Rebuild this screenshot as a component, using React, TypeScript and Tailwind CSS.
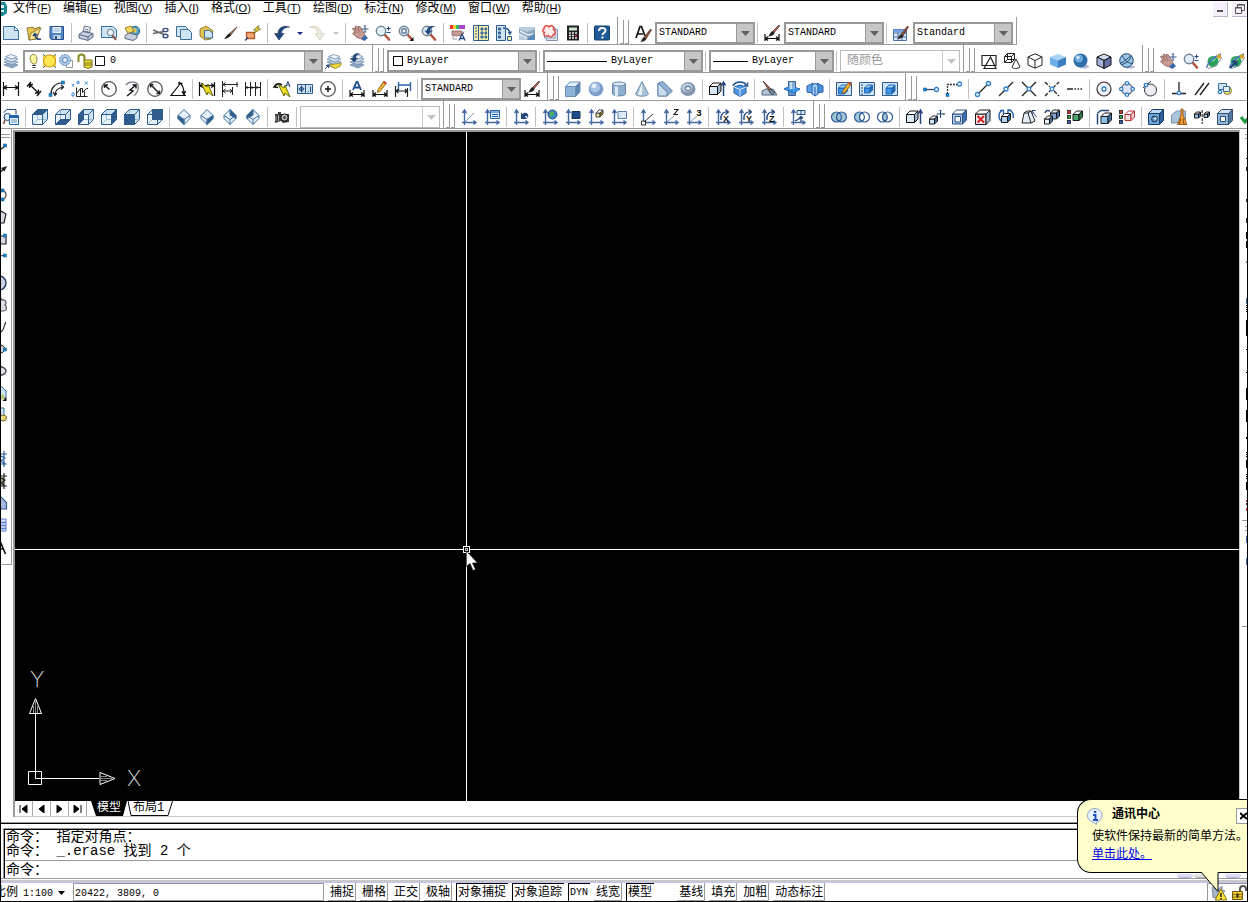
import type { ReactNode } from "react";
import clsx from "clsx";

const NAVY = "#23457a";
const BLUE = "#2f7fd0";
const PALE = "#cfe4f2";
const INK = "#1a1a1a";

function cube(x: number, y: number, s: number, d: number, front: string, top: string, side: string, stroke = INK) {
  return (
    <g stroke={stroke} strokeLinejoin="round">
      <path d={`M${x} ${y + d}h${s}v${s}h${-s}z`} fill={front} />
      <path d={`M${x} ${y + d}l${d} ${-d}h${s}l${-d} ${d}z`} fill={top} />
      <path d={`M${x + s} ${y + d}l${d} ${-d}v${s}l${-d} ${d}z`} fill={side} />
    </g>
  );
}

function viewCube(face: ReactNode) {
  return (
    <g stroke="#2f5c8c" strokeLinejoin="round">
      <path d="M.5 5.500l5-5h10v10l-5 5H.5z" fill={PALE} />
      <path d="M1 6h9v9H1z" fill="#e8f3fa" stroke="none" />
      <path d="M5.500 .5v10h10M.5 15.500l5-5" fill="none" stroke="#9dbcd8" />
      <g fill="#2f5c8c">{face}</g>
      <path d="M.5 5.500h10v10M10.500 5.500l5-5" fill="none" />
    </g>
  );
}

function isoCube(face: string) {
  return (
    <g stroke="#3f6c9c" strokeLinejoin="round">
      <path d="M8 .5l6 6v3L8 15.500l-6-6v-3z" fill="#e4f0f8" />
      <path d={face} fill="#2f5c8c" />
      <path d="M2 6.500l6 4 6-4M8 10.500v5" fill="none" />
    </g>
  );
}

function axes(extra?: ReactNode) {
  return (
    <>
      <path d="M3.500 16V2M1.500 4l2-3 2 3M1 13.500h14M12.500 11.500l2.500 2-2.500 2" fill="none" stroke="#4468a0" strokeWidth="1.400" />
      {extra}
    </>
  );
}

function axisRotate(letter: string) {
  return axes(
    <>
      <path d="M6 11C5 5 9 2 13 3M10.500 .5l3 2.500-3 2.500" fill="none" stroke={NAVY} strokeWidth="1.300" />
      <text x="8" y="12.500" fontSize="9" fontWeight="700" fontFamily="Liberation Sans" fill="#111">{letter}</text>
    </>,
  );
}

function dot(cx: number, cy: number, r = 2) {
  return <circle cx={cx} cy={cy} r={r} fill="#fff" stroke={BLUE} strokeWidth="1.300" />;
}

const node = (x: number, y: number) => <rect x={x} y={y} width="3" height="3" fill="#1c86c8" stroke="#0d4f88" strokeWidth=".5" />;

const bolt = <path d="M2 2l6 4 1-3 5 12-5-4-1 3z" fill="#f0e020" stroke="#55560c" strokeWidth=".9" />;

const brush = (
  <g>
    <path d="M14.500 1L8 9.500l2 1.500L15.500 2z" fill="#8a4a3a" stroke="#4b2a24" strokeWidth=".6" />
    <path d="M8 9l2.500 2c-1 2-3.500 3-6 2.800C5.500 12.500 6 10 8 9z" fill="#2b2b2b" />
  </g>
);

const pencil = (
  <g>
    <path d="M13 1l2.500 2L9 11.500 6.500 12.500 7 9.500z" fill="#f2b632" stroke="#7c5412" strokeWidth=".8" />
    <path d="M13 1l2.500 2-1.200 1.400-2.300-2z" fill="#c9483c" />
  </g>
);

const lens = (
  <g>
    <path d="M9.500 9.500L14 14.500" stroke="#b2553c" strokeWidth="2.600" strokeLinecap="round" />
    <circle cx="6" cy="6" r="4.700" fill="#e4f0f8" stroke="#6f8495" strokeWidth="1.400" />
  </g>
);

const printer = (
  <g stroke="#4a5a78" strokeWidth=".9" strokeLinejoin="round">
    <path d="M5 7l1.500-6 6 1.500L11.500 8" fill="#fff" />
    <path d="M1 9.500L5 6.500l10 2v3.500L10 15.500 1 13z" fill="#c7cfe0" />
    <path d="M1 9.500l9 2.500 5-3.500M10 12v3.500" fill="none" />
    <path d="M7 4l3.500 .8M6.500 6l4 .9" />
  </g>
);

const hand = (
  <g>
    <path d="M.5 3.500L2 3l2 2L3 1.500 4.500 1l2 3L6.500 1.500 8 1.500l3 5 2 4-3.500 3.500L5 12.500.5 8.500l1-1 2 .5z" fill="#c79a93" stroke="#8a5a54" strokeWidth=".8" />
    <path d="M3.500 5l2.500 3M6 4l2 3.500" stroke="#8a5a54" strokeWidth=".7" />
    <path d="M9 14l4-4 3 3-3.500 3z" fill="#3a67a8" />
    <path d="M13 .5v7M9.500 4h7M12 1.500l1-1 1 1M12 6.500l1 1 1-1" stroke={NAVY} strokeWidth=".9" fill="none" />
  </g>
);

const zoomRt = (
  <>
    {lens}
    <path d="M11.500 3.500h4M13.500 1.500v4M11.500 7.500h4" stroke={NAVY} strokeWidth="1.100" />
  </>
);

const layers = (
  <g stroke="#5f80a4" strokeWidth=".7">
    <path d="M1 12l6-2.500 8 2.500-6 3z" fill="#8fa9c4" />
    <path d="M1 9l6-2.500L15 9l-6 3z" fill="#b4cadd" />
    <path d="M1 6l6-2.500L15 6 9 9z" fill="#d6e5f0" />
    <path d="M2.500 3.500L8 1.500l6 2-5 2.500z" fill="#f0f6fa" />
  </g>
);

const dimBase = <path d="M1 9v7M15 9v7M1 13.500h14M4 11.500l-2.500 2 2.500 2M12 11.500l2.500 2-2.500 2" fill="none" stroke="#111" strokeWidth="1.200" />;

const planet = (
  <g>
    <circle cx="7" cy="8.500" r="5.500" fill="#27a458" />
    <path d="M4 7c2-3 5-3 6-2-1 3-3 5-6 2z" fill="#7fdc9a" />
    <path d="M1 15C0 11 9 3 15 1" fill="none" stroke="#4868c0" strokeWidth="1.400" />
    <path d="M2 15.500C8 15 14 9 15.500 4" fill="none" stroke="#8b96a8" />
    <circle cx="13" cy="3.500" r="2.200" fill="#d9a52c" />
  </g>
);

const rings = (left: string, mid: string, right: string) => (
  <g stroke="#2f5c96" strokeWidth="1.200">
    <ellipse cx="5.500" cy="8" rx="5" ry="5" fill={left} />
    <ellipse cx="10.500" cy="8" rx="5" ry="5" fill={right} />
    <path d="M8 3.700a5 5 0 0 1 0 8.600a5 5 0 0 1 0-8.600z" fill={mid} />
  </g>
);

const swatches = (
  <g stroke="#111" strokeWidth=".8">
    <rect x=".5" y="1.500" width="3" height="3" fill="#e03a30" />
    <rect x=".5" y="6.500" width="3" height="3" fill="#2fa84f" />
    <rect x=".5" y="11.500" width="3" height="3" fill="#3b62d0" />
  </g>
);

const extrude = (
  <>
    {cube(.5, 2, 8, 3.500, "#dbe9f4", "#fff", "#9db8d0", "#111")}
    <path d="M14.500 15V2M12.500 4.500L14.500 1l2 3.500" stroke={NAVY} strokeWidth="1.500" fill="none" />
  </>
);

const icons: Record<string, ReactNode> = {
  // standard
  New: <path d="M.5 1.500h11l4 4v9H.5zM11.500 1.500v4h4" fill={PALE} stroke="#3a6f9c" />,
  Open: (
    <>
      <path d="M1 3l6-1 1 2 6-2-3 12-8 1z" fill="#e9c74f" stroke="#7a6420" strokeWidth=".8" />
      <path d="M5 8l10-5-5 11-7 1z" fill="#fae79a" stroke="#7a6420" strokeWidth=".8" />
      <path d="M15 14c-3 1-6-1-6-4M7 11l2-2.500 2.500 2" fill="none" stroke={NAVY} strokeWidth="1.600" />
    </>
  ),
  Save: (
    <>
      <path d="M1 1.500h13.500v13H2.500L1 13z" fill="#4f84c4" stroke="#274f86" />
      <path d="M3.500 2h8.500v6H3.500z" fill="#eaf2fa" />
      <path d="M4.500 4h6.500M4.500 6h6.500" stroke="#8fb1d6" />
      <path d="M4.500 10h7v4h-7z" fill="#cfdae8" />
      <path d="M6 11h2v3H6z" fill="#274f86" />
    </>
  ),
  Plot: printer,
  Preview: (
    <>
      <path d="M.5 1.500h11l4 3v8H.5z" fill={PALE} stroke="#3a6f9c" />
      <path d="M11 10l4 5" stroke="#8a4a3a" strokeWidth="2" />
      <circle cx="9.500" cy="7.500" r="3.200" fill="#eef6fb" stroke="#5d7288" />
    </>
  ),
  Publish: (
    <>
      <circle cx="11" cy="6" r="4.700" fill="#4fa0d0" stroke="#2e6080" />
      <path d="M9 3l4 1-1 4-3-1z" fill="#e5c54c" />
      <path d="M1 3l6-2 3 5-6 3z" fill="#f2d75c" stroke="#7a6420" strokeWidth=".8" />
      <path d="M1 10.500L5 8l8 2v3l-4 2.500-8-2z" fill="#c7cfe0" stroke="#4a5a78" strokeWidth=".9" />
    </>
  ),
  Cut: (
    <g fill="none" stroke="#41517e" strokeWidth="1.400">
      <path d="M0 5l11 4.500M0 8.500L11 6.500" stroke="#666" />
      <ellipse cx="12.500" cy="5" rx="2.500" ry="1.600" />
      <ellipse cx="12.500" cy="11" rx="2.500" ry="1.800" />
    </g>
  ),
  Copy: (
    <g fill={PALE} stroke="#3a6f9c">
      <path d="M.5 1.500h9l2.500 3v7H.500z" />
      <path d="M4.500 4.500h8l3 3v7h-11z" />
    </g>
  ),
  Paste: (
    <>
      <path d="M1 4l6-3 7 5-2 8-6 1-5-4z" fill="#e3c14a" stroke="#7a6420" strokeWidth=".8" />
      <path d="M5.500 5.500h5l3 2.500v5h-8z" fill={PALE} stroke="#3a6f9c" />
    </>
  ),
  Match: (
    <>
      <path d="M15 2L7 9l1.500 1.500z" fill="#a36a50" stroke="#5a3428" strokeWidth=".8" />
      <path d="M7.500 8.500l1.500 2C6.500 13 4 14 2 14c1.500-1.500 3-4.500 5.500-5.500z" fill="#222" />
    </>
  ),
  Block: (
    <>
      <path d="M1.500 7.500h8v6h-8z" fill="#f5a874" stroke="#b4532c" strokeWidth="1.300" />
      <path d="M14 .5L8.500 5h3L8 9l7.500-5h-3z" fill="#ffe030" stroke="#6b6a10" strokeWidth=".8" />
      <path d="M0 15.500l3-3" stroke={NAVY} strokeWidth="1.500" />
    </>
  ),
  Undo: <path d="M15.500 2C10 0 4 2.500 4 8.500H.5L5 15l5-6.500H7.500C7.500 5 10 2.500 15.500 2z" fill="#24477c" stroke="#182f55" strokeWidth=".6" />,
  Redo: <path d="M.5 2C6 0 12 2.500 12 8.500h3.500L11 15 6 8.500h2.500C8.500 5 6 2.500 .5 2z" fill="#eceadb" stroke="#cfccb8" strokeWidth=".7" />,
  Pan: hand,
  Realtime: zoomRt,
  Window: (
    <>
      {lens}
      <rect x="4" y="4" width="4" height="4" fill="#fff" stroke={NAVY} />
      <path d="M15.500 12v4h-4z" fill="#111" />
    </>
  ),
  Previous: (
    <>
      {lens}
      <path d="M15 1.500C10 0 6 1.500 6 5.500H3.500L7 10l4-4.500H9c0-2 2-3.500 6-4z" fill="#24477c" />
    </>
  ),
  Properties: (
    <>
      <path d="M0 0h3v4H0z" fill="#e33" />
      <path d="M3 0h3v4H3z" fill="#ec3" />
      <path d="M6 0h3v4H6z" fill="#3b6" />
      <path d="M9 0h6v4H9z" fill="#a4c" />
      <path d="M2 6h9l3 2-2 2-6 1-4-1z" fill="#c79a93" stroke="#80504c" strokeWidth=".7" />
      <path d="M3 9v5h4" fill="none" stroke="#999" />
      <path d="M9 15.500L12 9l3 6.500M10 13.500h4" fill="none" stroke={NAVY} strokeWidth="1.300" />
    </>
  ),
  DesignCenter: (
    <g stroke="#2c5c92">
      <path d="M.5 .5h15v15H.5z" fill="#f7ecab" />
      <path d="M5.500 .5v15" />
      <path d="M2 3h2M2 6h2M2 9h2M2 12h2" />
      <path d="M8 3h2v2H8zM12 3h1.500v2H12zM8 7h2v2H8zM12 7h1.500v2H12zM8 11h2v2H8zM12 11h1.500v2H12z" fill="#8cb0d8" />
    </g>
  ),
  ToolPalettes: (
    <g stroke="#2c5c92">
      <path d="M.5 .5h9v15h-9z" fill={PALE} />
      <path d="M2.500 3h2v2h-2zM2.500 7h2v2h-2zM2.500 11h2v2h-2z" fill="#6d97c9" />
      <path d="M7 3c5 0 7 2 7 6M12 7l2 2 1.500-2.500" fill="none" strokeWidth="1.400" />
      <path d="M11.500 11.500h4v4h-4z" fill="#f7ecab" />
    </g>
  ),
  SheetSet: (
    <>
      <path d="M0 2h16v13H0z" fill="#b8cede" />
      <path d="M0 4l8 3 8-3v6l-8 4-8-4z" fill="#8aa4ba" />
      <path d="M1 6l8 4 6-1M0 9l8 4" stroke="#e8f0f6" strokeWidth="1.500" fill="none" />
      <path d="M10 12l6-4v7h-8z" fill="#5b8cb8" />
    </>
  ),
  Markup: (
    <>
      <path d="M4.500 4.500h11v11h-11z" fill="#dbe6f2" stroke="#8390b0" />
      <path d="M2.500 2.500h10.500v10.500H2.500z" fill="#fff" stroke="#8390b0" />
      <path d="M2 4c0-4 4-4 5-2 2-3 6 0 4.500 2.500 2.500 1 2 5 0 5-1 3-4 3-5 1-3 2-6-1-4-3-2.500-1-2-3.500-.5-3.500z" fill="#fdeceb" stroke="#e05048" strokeWidth="1.500" />
    </>
  ),
  Calculator: (
    <>
      <path d="M2 .5h12v15H2z" fill="#222" />
      <path d="M4 2.500h8v3H4z" fill="#cfe6cf" />
      <path d="M4 8h2M7 8h2M10 8h2M4 10.500h2M7 10.500h2M4 13h2M7 13h2M10 13h2" stroke="#eee" strokeWidth="1.300" />
      <path d="M10 10.500h2" stroke="#e33" strokeWidth="1.300" />
    </>
  ),
  Help: (
    <>
      <rect x=".5" y="1" width="15" height="14" rx="1" fill="#215a98" stroke="#123a68" />
      <path d="M5 6c0-4 6.500-4 6.500-.5C11.500 8 8.500 8 8.500 10M8.500 11.500v2" fill="none" stroke="#fff" strokeWidth="2" />
    </>
  ),
  TextStyle: (
    <>
      <path d="M1 13L5 1.500h1.500L10 11M2.500 9H8" fill="none" stroke="#111" strokeWidth="1.700" />
      <g transform="translate(1 3)">{brush}</g>
    </>
  ),
  DimStyle: (
    <>
      {dimBase}
      <path d="M15 0L8 7l1.500 1.500L15.500 1z" fill="#a36a50" stroke="#5a3428" strokeWidth=".8" />
      <path d="M8.500 6l2 2.500c-1 2-4 3-6.500 3 2-1.500 2-4.500 4.500-5.500z" fill="#222" />
    </>
  ),
  TableStyle: (
    <>
      <path d="M.5 4.500h13v11H.5zM.5 8h13M.5 12h13M5 4.500v11M9 4.500v11" fill="#dceafa" stroke="#4a6fa8" />
      <path d="M.5 4.500h13V7H.5z" fill="#7b9fe0" />
      {brush}
    </>
  ),
  // layers
  Layers: layers,
  MakeCurrent: (
    <>
      {layers}
      <path d="M3 12.500l5-1.500 7.500-.5-1 2.500-5 2.500z" fill="#f2dc3c" stroke="#8a7a14" strokeWidth=".7" />
      <path d="M-1 16l3.500-3.500M0 12.500h2.500V15" stroke={NAVY} fill="none" />
    </>
  ),
  LayerPrevious: (
    <>
      {layers}
      <path d="M12 1C7 -1 4 1 4 5H1.500L5 9.500 9 5H7c0-2 1-3.500 5-4z" fill="#24477c" />
    </>
  ),
  // shading
  Wire2D: <path d="M1 2.500h14v10H1zM3 15.500h12L9.500 4z" fill="none" stroke="#222" strokeWidth="1.200" />,
  Wire3D: (
    <g fill="none" stroke="#222">
      <path d="M.5 3.500h7v6h-7zM.5 3.500l3-3h7v6l-3 3M7.500 3.500l3-3M3.500 .5v6h7M.5 9.500l3-3" />
      <path d="M12 6l-4 8c1 2 6 2 8 0z" fill="#fff" />
    </g>
  ),
  Hidden: <path d="M8 .8l7 3.200v8L8 15.200 1 12V4zM1 4l7 3.500L15 4M8 7.500v7.500" fill="#fff" stroke="#222" strokeLinejoin="round" />,
  Flat: (
    <>
      <path d="M8 1l8 3-8 3.500L0 4z" fill="#a9d3f5" />
      <path d="M0 4l8 3.500V15l-8-3.500z" fill="#6cade8" />
      <path d="M16 4L8 7.500V15l8-3.500z" fill="#3b7dc0" />
    </>
  ),
  Gouraud: (
    <>
      <ellipse cx="11" cy="13.500" rx="5" ry="2" fill="#b8b8d8" />
      <circle cx="7.500" cy="7.500" r="7" fill="#2f6ea8" />
      <circle cx="6" cy="5.500" r="4" fill="#6faadd" />
      <circle cx="5" cy="4.500" r="1.700" fill="#d5ebfb" />
    </>
  ),
  FlatEdges: (
    <g stroke="#111" strokeLinejoin="round">
      <path d="M8 1l7 3-7 3.500L1 4z" fill="#d2ddf4" />
      <path d="M1 4l7 3.500v8L1 12z" fill="#a4b3da" />
      <path d="M15 4L8 7.500v8l7-3.500z" fill="#6673a8" />
    </g>
  ),
  GouraudEdges: (
    <g stroke="#23486e">
      <ellipse cx="11" cy="14" rx="5" ry="1.500" fill="#b8b8d8" stroke="none" />
      <circle cx="7.500" cy="7.500" r="6.800" fill="#9cc6e8" />
      <path d="M3 2.500c3 5 6 8 11 8M12 2.500C8 6 5 9 1 10.500M2 11.500c4 0 9-4 10.500-9" fill="none" />
    </g>
  ),
  OrbitPan: hand,
  OrbitZoom: zoomRt,
  Orbit: planet,
  ContinuousOrbit: (
    <>
      {planet}
      <path d="M1 15l6-6M3.500 8.500h4v4" stroke={NAVY} strokeWidth="2" fill="none" />
    </>
  ),
  // dimension
  Linear: <path d="M.5 1v14M15.500 1v14M1 6.500h14M4 4.500L1 6.500l3 2M12 4.500l3 2-3 2" fill="none" stroke="#111" strokeWidth="1.200" />,
  Aligned: <path d="M5 1L1 5.500M15 10l-4 5M3.500 3.500l9 8.500M3.500 7V3.500H7M9 12h3.500V8.500" fill="none" stroke="#111" strokeWidth="1.300" />,
  ArcLength: (
    <>
      <path d="M2 13C2 7 6 2 13 2M6 14c0-4 3-7 8-8M12 4l2.500 2-2.500 2.500M4 11l2 3.500L8 12" fill="none" stroke="#222" strokeWidth="1.200" />
      {node(12.500, 0)}
      {node(0, 12.500)}
    </>
  ),
  Ordinate: (
    <>
      <path d="M4.500 6.500v9h11M4.500 12.500l4-5h2v4l4-4h1.500M8.500 15.500v-8M12.500 15.500v-5" fill="none" stroke="#222" />
      <path d="M0 3l1 1.500L2 3M1 4.500V6M5 .5h2v2H5zM13 .5l2.500 3M15.500 .5l-2.500 3M0 12h2v3H0z" fill="none" stroke={BLUE} strokeWidth=".9" />
    </>
  ),
  Radius: (
    <g fill="none" stroke="#222">
      <circle cx="8" cy="8" r="7.300" stroke="#555" strokeWidth="1.300" />
      <path d="M8.500 8.500L3.500 4M3.500 7V4H7" strokeWidth="1.500" />
    </g>
  ),
  Jogged: (
    <>
      <path d="M2 4C5 0 12 0 14 4c1.500 5-1 8-4 11" fill="none" stroke="#8d8d9a" strokeWidth="1.500" />
      <path d="M3 15l6-5-3-1 6-5M8.500 4h3.500v3.500" fill="none" stroke="#111" strokeWidth="1.400" />
    </>
  ),
  Diameter: (
    <g fill="none" stroke="#222">
      <circle cx="8" cy="8" r="7.300" stroke="#555" strokeWidth="1.300" />
      <path d="M3.500 3.500l9 9M3.500 6.500v-3h3M12.500 9.500v3h-3" strokeWidth="1.500" />
    </g>
  ),
  Angular: <path d="M16 14.500H1L10 3M9 1c3 2 5 6 5 12M9 5V1.500l3.500 1M12 10l2 4 1.500-4" fill="none" stroke="#111" strokeWidth="1.200" />,
  QuickDim: (
    <>
      <path d="M.5 1v14M15.500 1v14M1 4.500h14M4 2.500l-3 2 3 2M12 2.500l3 2-3 2" fill="none" stroke="#111" strokeWidth="1.200" />
      {bolt}
    </>
  ),
  Baseline: <path d="M.5 0v16M1 3.500h15M10.500 6v8M1 10h9M3.500 1.500l-2.500 2 2.500 2M3.500 8L1 10l2.500 2M8 8l2 2-2 2M15 1v5" fill="none" stroke="#222" />,
  Continue: <path d="M.5 1v14M5.500 1v14M10.500 1v14M15.500 1v14M1 6.500h14M2.500 5L1 6.500 2.500 8M7.500 5L6 6.500 7.500 8M12.500 5L11 6.500 12.500 8" fill="none" stroke="#222" />,
  Leader: (
    <>
      <path d="M0 6c2-3 5-4 8-2M2.500 3L0 6l4 .5" fill="none" stroke="#111" strokeWidth="1.500" />
      <path d="M11.500 6L14 .5 16 6M12.500 4h3" fill="none" stroke={NAVY} />
      <g transform="translate(2 1)">{bolt}</g>
    </>
  ),
  Tolerance: (
    <g stroke="#2b5a92">
      <path d="M.5 3.500h15v9H.5zM8.500 3.500v9" fill={PALE} />
      <circle cx="4.500" cy="8" r="2" fill="none" />
      <path d="M4.500 4.500v7M1.500 8h6M11 10.500h.8M13.500 5.500v5.500" fill="none" stroke={NAVY} />
    </g>
  ),
  CenterMark: (
    <g fill="none" stroke="#111">
      <circle cx="8" cy="8" r="7.300" stroke="#555" strokeWidth="1.300" />
      <path d="M8 5v6M5 8h6" strokeWidth="1.500" />
    </g>
  ),
  DimEdit: (
    <>
      {dimBase}
      <path d="M4 9L7.500 1h1L12 9M5.500 6.500h5" fill="none" stroke="#1f4e8c" strokeWidth="1.800" />
    </>
  ),
  DimTextEdit: (
    <>
      {dimBase}
      <g transform="translate(-1 -1)">{pencil}</g>
    </>
  ),
  DimUpdate: (
    <>
      <path d="M3.500 1v9M15.500 1v9M4 4h11" fill="none" stroke="#2f65a8" strokeWidth="1.400" />
      <path d="M.5 5v11M12.500 7v9M1 10h11M3.500 8L1 10l2.500 2M10 8l2 2-2 2" fill="none" stroke="#222" strokeWidth="1.200" />
    </>
  ),
  // solids
  Box: cube(.5, 1, 10, 4.500, "#8fb3d8", "#e1eff9", "#5f86b4", "#6c90b4"),
  Sphere: (
    <>
      <circle cx="8" cy="8" r="7.300" fill="#7c9cc8" />
      <circle cx="7" cy="6.500" r="5" fill="#a9c4e4" />
      <circle cx="6" cy="5" r="2.200" fill="#e6f1fb" />
    </>
  ),
  Cylinder: (
    <>
      <path d="M1.500 3v10c1 2.500 12 2.500 13 0V3z" fill="#8fb0d0" stroke="#6584a8" />
      <path d="M4 4h3v11H4z" fill="#dcebf6" />
      <ellipse cx="8" cy="3" rx="6.500" ry="2" fill="#dfeaf4" stroke="#6584a8" />
    </>
  ),
  Cone: (
    <>
      <path d="M8 .5L1.500 13c2 3 11 3 13 0z" fill="#a9c3d8" stroke="#7893ac" />
      <path d="M8 2L4 14h4z" fill="#eaf3f9" />
    </>
  ),
  Wedge: (
    <>
      <path d="M1 2l5-1.500L15.500 10 10 15H1z" fill="#8fb0d0" stroke="#6584a8" />
      <path d="M1 2l9 9v4H1z" fill="#cadded" stroke="#6584a8" />
    </>
  ),
  Torus: (
    <>
      <ellipse cx="8" cy="8" rx="7.500" ry="7" fill="#8494ac" />
      <ellipse cx="7" cy="6.500" rx="5.500" ry="4.500" fill="#b6c6da" />
      <ellipse cx="8" cy="7.500" rx="2.800" ry="2" fill="#e8eef5" stroke="#586a88" />
    </>
  ),
  Extrude: extrude,
  Revolve: (
    <>
      <path d="M2 6l6-2 6 2v6l-6 3.500L2 12z" fill="#4c93e0" stroke="#2a5fa8" />
      <path d="M2 6l6 2.500L14 6M8 8.500v7" stroke="#d5eafc" fill="none" />
      <path d="M1 5C3 0 12 0 14 4M15.500 1.500V5H12" stroke="#2f5c8c" strokeWidth="1.600" fill="none" />
    </>
  ),
  Slice: (
    <>
      <path d="M1 10l4-2h7l4 6H1z" fill="#b3c4d6" stroke="#51687e" />
      <path d="M2 0l9 9-2 2z" fill="#a36a50" stroke="#5a3428" strokeWidth=".8" />
      <path d="M9 8l5 3-2 3-4-3z" fill="#6f879f" stroke="#445" strokeWidth=".8" />
    </>
  ),
  Section: (
    <>
      <path d="M4.500 .5h7v14h-7z" fill="#6b96c8" stroke="#3a6296" />
      <path d="M0 8l6-3 10 3-6 4z" fill="#3c9bf0" stroke="#2166b0" />
      <path d="M5 1h6v7H5z" fill="#86acd8" />
      <path d="M6 1h2v7H6z" fill="#c6dcf0" />
    </>
  ),
  Interfere: (
    <>
      <path d="M0 5l6-3v10l-6-1z" fill="#5ea4ea" stroke="#2a5fa8" />
      <path d="M16 5l-6-3v10l6-1z" fill="#4b8ed8" stroke="#2a5fa8" />
      <path d="M5 4l3-1.500L11 4v9l-3 2-3-2z" fill="#9cd0fa" stroke="#2a5fa8" />
      <path d="M8 6v9" stroke="#2a5fa8" />
    </>
  ),
  SetupDrawing: (
    <>
      <path d="M.5 1.500h15v13H.5z" fill={PALE} stroke="#2f5c8c" />
      {cube(2.500, 4, 6, 3, "#3a94ec", "#9cd0fa", "#2468b4", "#2468b4")}
      {pencil}
    </>
  ),
  SetupView: (
    <>
      <path d="M.5 1.500h15v13H.5z" fill={PALE} stroke="#2f5c8c" />
      <path d="M2 4h2M2 7h2M2 10h2M2 13h2" stroke={NAVY} />
      {cube(5.500, 4, 5, 3, "#3a94ec", "#9cd0fa", "#2468b4", "#2468b4")}
    </>
  ),
  SetupProfile: (
    <>
      <path d="M.5 1.500h15v13H.5z" fill={PALE} stroke="#2f5c8c" />
      {cube(4, 4, 6, 3, "#3a94ec", "#9cd0fa", "#2468b4", "#2468b4")}
    </>
  ),
  // object snap
  TempTrack: (
    <>
      <path d="M2 8.500h12" stroke={NAVY} strokeWidth="1.200" />
      {node(.5, 7)}
      {dot(13.500, 8.500)}
    </>
  ),
  SnapFrom: (
    <>
      <path d="M1.500 13V3.500H13" fill="none" stroke="#333" strokeWidth="1.300" strokeDasharray="2 1" />
      {node(0, 12.500)}
      {dot(13.500, 3)}
    </>
  ),
  Endpoint: (
    <>
      <path d="M2 14L14 2" stroke="#222" strokeWidth="1.300" />
      {dot(2.500, 13.500)}
      {dot(13.500, 2.500)}
    </>
  ),
  Midpoint: (
    <>
      <path d="M1 15L15 1" stroke="#222" strokeWidth="1.300" />
      {dot(8, 8)}
    </>
  ),
  Intersection: (
    <>
      <path d="M1 1l14 14M1 15L15 1" stroke="#222" strokeWidth="1.300" />
      {dot(8, 8, 1.800)}
    </>
  ),
  Apparent: (
    <>
      <path d="M1 1l5 5M10 10l5 5M1 15L15 1" stroke="#222" strokeWidth="1.300" strokeDasharray="4 1.500" />
      {dot(8, 8, 1.800)}
    </>
  ),
  Extension: <path d="M0 8h6M7.500 8h1.500M10.500 8H12M13.500 8H15" stroke="#222" strokeWidth="1.300" />,
  Center: (
    <>
      <circle cx="8" cy="8" r="7" fill="#eef0f6" stroke="#333" strokeWidth="1.200" />
      {dot(8, 8)}
    </>
  ),
  Quadrant: (
    <>
      <circle cx="8" cy="8" r="5.500" fill="#dfe4f0" stroke="#333" />
      {dot(8, 2.300, 1.700)}
      {dot(8, 13.700, 1.700)}
      {dot(2.300, 8, 1.700)}
      {dot(13.700, 8, 1.700)}
    </>
  ),
  Tangent: (
    <>
      <circle cx="8.500" cy="9" r="6" fill="#eef0f6" stroke="#333" />
      <path d="M1 7L9 0" stroke="#333" />
      {dot(4, 4, 1.700)}
    </>
  ),
  Perpendicular: (
    <>
      <path d="M1 12.500h14M8 1v9" stroke="#222" strokeWidth="1.300" />
      {dot(8, 12, 1.700)}
    </>
  ),
  Parallel: <path d="M1 14L10 2M6 14l9-12" stroke="#222" strokeWidth="1.400" />,
  SnapInsert: (
    <>
      <path d="M1.500 2.500h8v6h-8z" fill={PALE} stroke="#3a6f9c" />
      <circle cx="10.500" cy="9.500" r="4" fill="#f2dc7c" stroke="#8a7a34" />
      <path d="M6.500 5.500h6v5h-6z" fill="#e2eef6" stroke="#3a6f9c" />
      {dot(3, 11, 1.700)}
    </>
  ),
  // views
  NamedViews: (
    <>
      <path d="M.5 3.500L4 .5h9v5" fill="#fff" stroke={NAVY} />
      <circle cx="4.500" cy="8" r="3.500" fill="#dcecf8" stroke={NAVY} />
      <path d="M6.500 6.500h9v9h-9z" fill="#eaf3fb" stroke="#1e66b0" />
      <path d="M6.500 6.500h9V9h-9z" fill="#1e66b0" />
      <path d="M8 11h6M8 13h6" stroke="#6b94c4" />
      <path d="M2 11l-1.500 4" stroke="#8a4a3a" strokeWidth="1.600" />
    </>
  ),
  Top: viewCube(<path d="M.5 5.500l5-5h10l-5 5z" />),
  Bottom: viewCube(<path d="M.5 15.500l5-5h10l-5 5z" />),
  Left: viewCube(<path d="M.5 5.500l5-5v10l-5 5z" />),
  Right: viewCube(<path d="M10.500 5.500l5-5v10l-5 5z" />),
  Front: viewCube(<path d="M.5 5.500h10v10H.5z" />),
  Back: viewCube(<path d="M5.500 .5h10v10h-10z" />),
  SWIso: isoCube("M2 6.500l6 4v5l-6-6z"),
  SEIso: isoCube("M14 6.500l-6 4v5l6-6z"),
  NEIso: isoCube("M8 .5l6 6v3L8 6z"),
  NWIso: isoCube("M8 .5l-6 6v3L8 6z"),
  Camera: (
    <>
      <path d="M1 5h3V3h3v2h8v8l-6 1-2-2-6 2z" fill="#3a3a3a" />
      <circle cx="10.500" cy="8.500" r="3.600" fill="#bcbcbc" stroke="#111" />
      <circle cx="10.500" cy="8.500" r="1.500" fill="#444" />
      <path d="M2 7v5M4.500 6v6" stroke="#aaa" />
    </>
  ),
  // ucs
  UCS: axes(<path d="M4 13L13 4" stroke="#7f97bd" />),
  NamedUCS: axes(<path d="M6.500 1.500h9v8h-9zM6.500 3h9M8 5.500h6M8 7.500h6" fill="#dcebfa" stroke="#2464a8" />),
  PreviousUCS: axes(<path d="M14.500 10C17 5 13 2 9.500 5L8 3.500V10h6l-2-2.500c1.500-1 3 0 2.500 2.500z" fill="#24477c" />),
  World: axes(
    <>
      <circle cx="10.500" cy="5.500" r="4.500" fill="#3a86c8" stroke="#1c4b80" />
      <path d="M8 3l3-1 1 3-2 3-2-1z" fill="#4caf50" />
    </>,
  ),
  ObjectUCS: axes(<path d="M7 2.500h8v7H7z" fill="#1f4e8c" stroke="#16365f" />),
  FaceUCS: axes(cube(8, 1, 4, 3, "#f0e2a0", "#fff", "#8a7a34", "#444")),
  ViewUCS: axes(<path d="M7 9.500v-7h8.500v7z" fill="#dcebfa" stroke="#5a7fa8" />),
  OriginUCS: axes(<path d="M4 13L13 5M1.500 12h4v4h-4z" fill="#fff" stroke="#333" />),
  ZAxis: axes(
    <>
      <path d="M4 13L11 7" stroke="#7f97bd" />
      <path d="M11 .5h4L11 5.500h4" fill="none" stroke="#111" strokeWidth="1.100" />
    </>,
  ),
  ThreePoint: axes(
    <>
      <path d="M4 13L11 7" stroke="#7f97bd" />
      <text x="10.500" y="7" fontSize="9" fontWeight="700" fontFamily="Liberation Sans">3</text>
    </>,
  ),
  RotateX: axisRotate("X"),
  RotateY: axisRotate("Y"),
  RotateZ: axisRotate("Z"),
  ApplyUCS: axes(
    <>
      <path d="M7 1.500h8v4H7zM11 1.500v4" fill="#dcebfa" stroke="#1f4e8c" />
      <path d="M5 12l6-3M11 13V7.500M9 9.500l2-2 2 2" fill="none" stroke={NAVY} strokeWidth="1.300" />
    </>,
  ),
  // solids editing
  Union: rings("#9fc6d8", "#9fc6d8", "#9fc6d8"),
  Subtract: rings("#9fc6d8", "#fff", "#fff"),
  Intersect: rings("#fff", "#9fc6d8", "#fff"),
  ExtrudeFaces: extrude,
  MoveFaces: (
    <>
      {cube(.5, 7, 5, 3, "#cfe4f2", "#fff", "#3e6fa8")}
      <path d="M11.500 1v8M7.500 5h8M10.500 2l1-1 1 1M14.500 4l1 1-1 1" stroke={NAVY} fill="none" />
    </>
  ),
  OffsetFaces: (
    <>
      {cube(.5, 1, 10, 4, "#b8d4ea", "#fff", "#3e6fa8", "#2c4f80")}
      <path d="M3 7.500h5.500V13H3z" fill="#eef6fb" stroke="#2c4f80" />
    </>
  ),
  DeleteFaces: (
    <>
      {cube(.5, 1, 10.500, 4, "#f4e8ee", "#fff", "#a8c0d8")}
      <path d="M2.500 7l6.500 6.500M9 7l-6.500 6.500" stroke="#d22" strokeWidth="2" />
    </>
  ),
  RotateFaces: (
    <>
      {cube(3.500, 4.500, 6, 3, "#b8d4ea", "#fff", "#3e6fa8")}
      <path d="M5 1C0 3 0 9 3 12M2 1.500h3.500V5M11 1c4 1 5 5 4 8M13 1h-3v3" fill="none" stroke="#2f65a8" strokeWidth="1.500" />
    </>
  ),
  TaperFaces: (
    <>
      <path d="M1 14l2-10h4l3 10zM7 4l3-2 4 10-4 2M3 4l3-2h4" fill="#e4eef6" stroke="#222" />
      <path d="M15.500 8L11 2M11 5V1.500h3.500" stroke={NAVY} fill="none" />
    </>
  ),
  CopyFaces: (
    <>
      {cube(6.500, 1, 6, 3, "#7fa5d0", "#e8f2fa", "#3e6fa8")}
      {cube(.5, 7, 5, 3, "#e8f2fa", "#fff", "#3e6fa8")}
      <path d="M1 4C2 1 4 1 6 2" stroke={NAVY} strokeWidth="1.500" fill="none" />
    </>
  ),
  ColorFaces: (
    <>
      {swatches}
      {cube(6, 2, 6, 3.500, "#49a872", "#e8f2fa", "#2a7a4c")}
    </>
  ),
  CopyEdges: (
    <>
      {cube(5, 4, 7, 3.500, "#8fc0e8", "#e8f2fa", "#3e6fa8")}
      <path d="M1.500 15.500V4.500M1.500 4L5 1.500h8" fill="none" stroke={NAVY} strokeWidth="1.500" />
    </>
  ),
  ColorEdges: (
    <>
      {swatches}
      {cube(6, 2, 6, 3.500, "#fbe3e3", "#fff", "#e8d0d8", "#b83030")}
    </>
  ),
  Imprint: (
    <>
      {cube(.5, .5, 11, 4, "#6fa6da", "#bcd8f0", "#2f5f98", "#183a68")}
      <circle cx="6.500" cy="10" r="2.800" fill="none" stroke="#123" />
      <circle cx="7.500" cy="9.500" r="1" fill="#fff" />
    </>
  ),
  Clean: (
    <>
      <path d="M.5 6l5-4h9v8l-4 4H.500z" fill="#a9c3dc" stroke="#7893ac" />
      <path d="M10 0h2v6l4 9.500H6.500L10 6z" fill="#f0a030" stroke="#8a4a14" strokeWidth=".8" />
      <path d="M9.500 9.500l-1 6M12 9.500l1 6" stroke="#8a4a14" />
    </>
  ),
  Separate: (
    <>
      {cube(.5, 3, 4, 2, "#9cc4e4", "#fff", "#3e6fa8")}
      {cube(10, 3, 3.500, 2, "#9cc4e4", "#fff", "#3e6fa8")}
      <path d="M8.200 1v14" stroke="#111" strokeDasharray="3 1" />
    </>
  ),
  Shell: (
    <>
      {cube(.5, .5, 11, 4, "#8fb6dc", "#d4e5f3", "#55789e", "#34506e")}
      <path d="M3.500 7.500h5v5h-5z" fill="#f4f8fb" stroke="#34506e" />
    </>
  ),
  Check: <path d="M1 8l4 5L14 2" fill="none" stroke="#1f9a40" strokeWidth="3" />,
  // draw
  Line: (
    <>
      <path d="M0 14L14 3" stroke="#222" strokeWidth="1.400" />
      {node(12.500, 1)}
    </>
  ),
  ConstructionLine: (
    <>
      <path d="M0 14L13 4" stroke="#222" strokeWidth="1.500" />
      <path d="M16 1l-2.500 5.500L10 3z" fill="#222" />
    </>
  ),
  Polyline: (
    <>
      <path d="M9 3c8 0 8 10 0 10" fill="none" stroke="#555" strokeWidth="1.400" />
      {node(10, 2)}
      {node(10, 11)}
    </>
  ),
  Polygon: <path d="M2 6l8-4 5 3-2 9H4z" fill="#d9d9e8" stroke="#222" strokeWidth="1.200" />,
  Rectangle: (
    <>
      <path d="M1 5h14v8H1z" fill="#d9d9e8" stroke="#222" strokeWidth="1.200" />
      {node(12.500, 3)}
    </>
  ),
  Arc: (
    <>
      <path d="M1 14C1 6 6 2.500 14 2.500" fill="none" stroke="#222" />
      {node(12.500, 1)}
    </>
  ),
  Circle: <circle cx="8" cy="8" r="7" fill="#cfd2e2" stroke="#1d3358" strokeWidth="1.400" />,
  Cloud: <path d="M2 4c3-4 8-4 9-1 4-1 5 3 3 5 3 3 1 6-2 6H4z" fill="#dcdde9" stroke="#555" strokeWidth="1.200" />,
  Spline: <path d="M1 3c2 10 7 12 10 9s2-7 4-9" fill="none" stroke="#444" strokeWidth="1.300" />,
  Ellipse: (
    <>
      <ellipse cx="7" cy="8" rx="7" ry="4.500" fill="#cfd2e2" stroke="#222" />
      {node(12.500, 7)}
    </>
  ),
  EllipseArc: <ellipse cx="8" cy="8" rx="7" ry="4.500" fill="#e2e2ec" stroke="#444" strokeWidth="1.400" />,
  InsertBlock: (
    <>
      <path d="M2 2h9l4 4v7H2z" fill={PALE} stroke="#3a6f9c" />
      <circle cx="11" cy="12" r="2.500" fill="#b5c76a" />
      <path d="M15.500 12v4h-4z" fill="#111" />
    </>
  ),
  MakeBlock: (
    <>
      <path d="M9 1h4v9H9z" fill={PALE} stroke="#3a6f9c" />
      <ellipse cx="12" cy="11" rx="3.500" ry="3" fill="#e9dc7c" stroke="#6d6624" />
    </>
  ),
  Point: null,
  Hatch: <path d="M0 3h16M0 13h16M13 0v16M8 0v16M10 5l4 2-4 3 4 3" fill="none" stroke="#2f5c9c" strokeWidth="1.200" />,
  Gradient: (
    <>
      <path d="M8 4h5v9H8z" fill="#b9b48c" />
      <path d="M0 3h16M0 13h16M13 0v16M10 5l4 2-4 3 4 3" fill="none" stroke="#222" strokeWidth="1.200" />
    </>
  ),
  Region: <path d="M1 14V6l8-5 6.500 6.500V14z" fill="#a9b9e0" stroke="#2f5c8c" strokeWidth="1.200" />,
  Table: (
    <>
      <path d="M1 2h14v12H1z" fill="#dfe6fa" stroke="#5b7fd0" />
      <path d="M1 5.500h14M1 8.500h14M1 11.500h14M8 2v12" stroke="#5b7fd0" strokeWidth="1.300" />
    </>
  ),
  MText: <path d="M3 15L9 2l5.500 13M5 10h7.500" fill="none" stroke="#111" strokeWidth="1.600" />,
};

function Icon({ name }: { name: string }) {
  return (
    <svg width="16" height="16" viewBox="0 0 16 16" className="shrink-0 overflow-visible">
      {icons[name]}
    </svg>
  );
}

function Separator() {
  return <span className="h-[20px] w-[6px] shrink-0 pl-[2px]"><span className="block h-full w-px bg-[#c2c2c2]" /></span>;
}

function Tools({ names }: { names: string }) {
  return (
    <>
      {names.split(" ").map((name, i) =>
        name === "|" ? (
          <Separator key={i} />
        ) : (
          <button key={i} type="button" aria-label={name} className="flex h-[22px] w-[23px] shrink-0 items-center pl-[3px]">
            <Icon name={name} />
          </button>
        ),
      )}
    </>
  );
}

function Toolbar({ children, grip = true, last = false }: { children: ReactNode; grip?: boolean; last?: boolean }) {
  return (
    <div className={clsx("flex h-full shrink-0 items-center border-b border-[#999] pt-[5px]", last ? "grow" : "border-r pr-[3px]")}>
      {grip && (
        <span className="flex h-[24px] w-[14px] shrink-0 gap-px self-end pl-[2px]">
          <span className="w-[4px] border-r border-b border-[#999]" />
          <span className="w-[4px] border-r border-b border-[#999]" />
        </span>
      )}
      {children}
    </div>
  );
}

function DownArrow() {
  return (
    <svg width="9" height="5" viewBox="0 0 9 5" fill="currentColor">
      <path d="M0 0h9L4.500 5z" />
    </svg>
  );
}

interface ComboProps {
  label: string;
  value: string;
  className: string;
  disabled?: boolean;
  children?: ReactNode;
}

function Combo({ label, value, className, disabled, children }: ComboProps) {
  return (
    <div
      className={clsx(
        "flex h-[22px] shrink-0 items-stretch bg-white",
        disabled ? "border border-[#bbb]" : "border-2 border-[#999]",
        className,
      )}
    >
      <div className="flex min-w-0 grow items-center gap-1 pl-[2px]">
        {children}
        <select
          aria-label={label}
          disabled={disabled}
          defaultValue={value}
          className={clsx(
            "min-w-0 grow appearance-none bg-transparent leading-[14px]",
            disabled ? "pl-1 text-[12px] text-[#999]" : "text-[10px]",
          )}
        >
          <option>{value}</option>
        </select>
      </div>
      <span
        className={clsx(
          "flex w-[17px] shrink-0 items-center justify-center border-l",
          disabled ? "border-[#ccc] text-[#c4c4c4]" : "border-[#999] bg-[#c6c6c6] text-[#606060]",
        )}
      >
        <DownArrow />
      </span>
    </div>
  );
}

const menus = [
  ["文件", "F"],
  ["编辑", "E"],
  ["视图", "V"],
  ["插入", "I"],
  ["格式", "O"],
  ["工具", "T"],
  ["绘图", "D"],
  ["标注", "N"],
  ["修改", "M"],
  ["窗口", "W"],
  ["帮助", "H"],
];

function MenuBar() {
  return (
    <div className="flex h-[16px] items-center overflow-hidden">
      <svg width="7" height="14" viewBox="0 0 7 14" className="shrink-0">
        <path d="M0 0h4l2 4v7l-4 3H0z" fill="#1c8a96" />
        <path d="M0 3h3v3H0zM0 8h3v2H0z" fill="#d8f2f4" />
      </svg>
      <nav className="flex gap-3 pl-[5px]">
        {menus.map(([label, key]) => (
          <button key={key} type="button" className="h-[14px] text-[12px] leading-[13px] whitespace-nowrap">
            {label}
            <span className="font-['Liberation_Sans',sans-serif] text-[11px]">
              (<u>{key}</u>)
            </span>
          </button>
        ))}
      </nav>
      <div className="ml-auto flex gap-1">
        <button type="button" aria-label="最小化" className="flex h-[15px] w-[15px] items-end justify-center border-r border-b border-[#b9b4cc] bg-[#f4effa] pb-[4px]">
          <span className="h-[2px] w-[6px] bg-[#555]" />
        </button>
        <button type="button" aria-label="还原" className="flex h-[15px] w-[15px] items-center justify-center border-b border-[#b9b4cc] bg-[#f4effa]">
          <svg width="10" height="10" viewBox="0 0 10 10" fill="none" stroke="#555">
            <path d="M2.500 3V.5h7v6H7M2 1h8M.500 3.500h6v6h-6zM0 4h7" />
          </svg>
        </button>
      </div>
    </div>
  );
}

function LayerState() {
  return (
    <svg width="80" height="16" viewBox="0 0 80 16" className="-mr-[1px] shrink-0">
      <path d="M6 11C3 9 1.500 2 6 1.500S11 8 8.500 11z" fill="#fff7a0" stroke="#8a8440" />
      <path d="M5 12.500h4M5.500 14.500h3" stroke="#444" />
      <path d="M16 2h13v12H16z" fill="#f4d84a" />
      <circle cx="22.500" cy="8" r="6" fill="#ffe850" stroke="#c98a1c" />
      <path d="M16 1l2 2M29 1l-2 2M16 15l2-2M29 15l-2-2" stroke="#2f6fb0" />
      <path d="M39.500 7.500h6v7h-6z" fill="#fff" stroke="#999" />
      <circle cx="38" cy="7" r="5.500" fill="#a9c6e4" stroke="#5b86b8" strokeDasharray="2 1" />
      <circle cx="38" cy="7" r="2.500" fill="#e6f0fa" stroke="#5b86b8" />
      <path d="M51.500 9V4.500c0-4 6-4 6 0V8" fill="none" stroke="#8a8a20" strokeWidth="2" />
      <path d="M57 7h8v7l-4 1.500-4-1.500z" fill="#ecdf3c" stroke="#77751c" />
      <path d="M57 10h8M57 12h8" stroke="#77751c" />
      <path d="M68.500 3.500h9v9h-9z" fill="#fff" stroke="#111" />
    </svg>
  );
}

function Toolbars() {
  return (
    <div className="-ml-px">
      <div className="flex h-[28px] overflow-hidden">
        <Toolbar grip={false}>
          <Tools names="New Open Save | Plot Preview Publish | Cut Copy Paste Match Block | Undo" />
          <button type="button" aria-label="放弃列表" className="flex w-[12px] shrink-0 justify-center text-[#1b2f80]">
            <svg width="6" height="3" viewBox="0 0 6 3" fill="currentColor"><path d="M0 0h6L3 3z" /></svg>
          </button>
          <Tools names="Redo" />
          <button type="button" aria-label="重做列表" disabled className="flex w-[14px] shrink-0 justify-center text-[#c4c4c4]">
            <svg width="6" height="3" viewBox="0 0 6 3" fill="currentColor"><path d="M0 0h6L3 3z" /></svg>
          </button>
          <Tools names="| Pan Realtime Window Previous | Properties DesignCenter ToolPalettes SheetSet Markup Calculator | Help" />
        </Toolbar>
        <Toolbar>
          <Tools names="TextStyle" />
          <Combo label="文字样式" value="STANDARD" className="w-[100px]" />
          <Tools names="| DimStyle" />
          <Combo label="标注样式" value="STANDARD" className="w-[100px]" />
          <Tools names="| TableStyle" />
          <Combo label="表格样式" value="Standard" className="w-[100px]" />
        </Toolbar>
      </div>

      <div className="flex h-[28px] overflow-hidden">
        <Toolbar grip={false}>
          <Tools names="Layers" />
          <Combo label="图层" value="0" className="w-[300px]">
            <LayerState />
          </Combo>
          <Tools names="MakeCurrent LayerPrevious" />
        </Toolbar>
        <Toolbar>
          <Combo label="颜色" value="ByLayer" className="w-[150px]">
            <span className="ml-[2px] h-[10px] w-[10px] shrink-0 border border-black" />
          </Combo>
          <Separator />
          <Combo label="线型" value="ByLayer" className="w-[160px]">
            <span className="h-px w-[60px] shrink-0 bg-black" />
          </Combo>
          <Separator />
          <Combo label="线宽" value="ByLayer" className="w-[125px]">
            <span className="h-px w-[35px] shrink-0 bg-black" />
          </Combo>
          <Separator />
          <Combo label="打印样式" value="随颜色" className="w-[120px]" disabled />
        </Toolbar>
        <Toolbar>
          <Tools names="Wire2D Wire3D Hidden Flat Gouraud FlatEdges GouraudEdges" />
        </Toolbar>
        <Toolbar last>
          <Tools names="OrbitPan OrbitZoom Orbit ContinuousOrbit" />
        </Toolbar>
      </div>

      <div className="flex h-[28px] overflow-hidden">
        <Toolbar grip={false}>
          <Tools names="Linear Aligned ArcLength Ordinate | Radius Jogged Diameter Angular | QuickDim Baseline Continue | Leader Tolerance CenterMark | DimEdit DimTextEdit DimUpdate |" />
          <Combo label="当前标注样式" value="STANDARD" className="w-[100px]" />
          <Tools names="DimStyle" />
        </Toolbar>
        <Toolbar>
          <Tools names="Box Sphere Cylinder Cone Wedge Torus | Extrude Revolve | Slice Section Interfere | SetupDrawing SetupView SetupProfile" />
        </Toolbar>
        <Toolbar last>
          <Tools names="TempTrack SnapFrom | Endpoint Midpoint Intersection Apparent Extension | Center Quadrant Tangent | Perpendicular Parallel SnapInsert" />
        </Toolbar>
      </div>

      <div className="flex h-[28px] overflow-hidden">
        <Toolbar grip={false}>
          <Tools names="NamedViews | Top Bottom Left Right Front Back | SWIso SEIso NEIso NWIso | Camera |" />
          <Combo label="视图" value="" className="w-[140px]" disabled />
        </Toolbar>
        <Toolbar>
          <Tools names="UCS NamedUCS | PreviousUCS | World ObjectUCS FaceUCS ViewUCS | OriginUCS ZAxis ThreePoint | RotateX RotateY RotateZ | ApplyUCS" />
        </Toolbar>
        <Toolbar last>
          <Tools names="Union Subtract Intersect | ExtrudeFaces MoveFaces OffsetFaces DeleteFaces RotateFaces TaperFaces CopyFaces ColorFaces | CopyEdges ColorEdges | Imprint Clean Separate Shell Check" />
        </Toolbar>
      </div>
    </div>
  );
}

const drawTools = [
  "Line", "ConstructionLine", "Polyline", "Polygon", "Rectangle", "Arc", "Circle", "Cloud", "Spline", "Ellipse",
  "EllipseArc", "InsertBlock", "MakeBlock", "Point", "Hatch", "Gradient", "Region", "Table", "MText",
];

function DrawBar() {
  return (
    <div className="w-[11px] shrink-0 self-start overflow-hidden border-r border-b border-[#999] pt-[5px] pb-[6px]">
      <div className="mr-[1px] h-[4px] border-y border-[#999]" />
      <div className="pt-[2px]">
        {drawTools.map((name) => (
          <button key={name} type="button" aria-label={name} className="-ml-[10px] flex h-[22px] w-[16px] items-center">
            <Icon name={name} />
          </button>
        ))}
      </div>
    </div>
  );
}

// [y, height, colour] of what is still visible of the modify toolbar
const slivers: [number, number, string][] = [
  [29, 1, "#111"], [38, 4, "#333"], [70, 3, "#333"], [89, 5, "#333"], [103, 7, "#000"], [112, 7, "#000"],
  [132, 2, "#5a8c8c"], [169, 6, "#2f6fb0"], [176, 1, "#000"], [178, 1, "#000"], [180, 1, "#000"], [182, 1, "#000"],
  [191, 16, "#000"], [220, 1, "#000"], [243, 1, "#000"], [259, 12, "#000"], [281, 12, "#000"], [308, 2, "#000"],
  [323, 1, "#000"], [325, 1, "#000"], [327, 1, "#000"], [331, 8, "#000"], [345, 1, "#000"], [347, 1, "#000"],
  [349, 1, "#000"], [353, 8, "#000"], [371, 2, "#b02020"], [374, 2, "#333"], [379, 3, "#e03030"],
  [407, 7, "#3f78bd"], [429, 7, "#3f78bd"],
];

function ModifyBar() {
  return (
    <svg width="7" height="500" viewBox="0 0 7 500" className="shrink-0">
      <path d="M5 5.500h2M5 9.500h2M2 391.500h5M5 397.500h2M5 401.500h2M2 497.500h5" stroke="#999" />
      {slivers.map(([y, h, fill]) => (
        <rect key={y} x="6" y={y} width="1" height={h} fill={fill} />
      ))}
    </svg>
  );
}

function UcsIcon() {
  return (
    <svg width="130" height="130" viewBox="0 -8 130 130" className="absolute bottom-[11px] left-[11px] overflow-visible" fill="none" stroke="#fff">
      <path d="M2.500 103.500h13v13h-13zM9.500 110.500V46M9.500 110.500H73" />
      <path d="M9.500 30.500l-6 15h12zM89 110.500l-15-6v12z" />
      <path d="M9.500 33v12M7.500 38v7M11.500 38v7M86 110.500H74M81 108.500h-7M81 112.500h-7" stroke="#888" />
      <g fill="#ddd" stroke="none" fontFamily="Inter, Lato, sans-serif" fontSize="22" fontWeight="200">
        <text x="4" y="19">Y</text>
        <text x="101" y="118">X</text>
      </g>
    </svg>
  );
}

function Crosshair() {
  return (
    <>
      <div className="absolute inset-y-0 left-[451px] w-px bg-white" />
      <div className="absolute inset-x-0 top-[417px] h-px bg-white" />
      <div className="absolute top-[414px] left-[448px] h-[7px] w-[7px] border border-white bg-black p-[1px]">
        <div className="h-full w-full border border-[#ccc]" />
      </div>
      <svg width="13" height="20" viewBox="0 0 13 20" className="absolute top-[419px] left-[451px]">
        <path d="M.5 0v15.500l3.500-3 3 7 2.500-1-3-6.500h5z" fill="#fff" stroke="#000" strokeWidth=".6" />
      </svg>
    </>
  );
}

const tabArrows = ["M1 0v8M8 0L3 4l5 4z", "M7 0L2 4l5 4z", "M2 0l5 4-5 4z", "M1 0l5 4-5 4zM8 0v8"];
const tabArrowLabels = ["第一个", "上一个", "下一个", "最后一个"];

function LayoutTabs() {
  return (
    <div className="flex h-[16px] shrink-0 border-b border-[#c8c8c8]">
      {tabArrows.map((d, i) => (
        <button key={d} type="button" aria-label={tabArrowLabels[i]} className="flex w-[18px] items-center justify-center border-r border-[#aaa]">
          <svg width="9" height="8" viewBox="0 0 9 8" fill="#000" stroke="#000"><path d={d} /></svg>
        </button>
      ))}
      <button type="button" className="ml-[4px] flex h-[15px] text-[12px] leading-[14px] text-white">
        <svg width="6" height="15" viewBox="0 0 6 15"><path d="M0 0h6v15H5z" fill="#000" /></svg>
        <span className="h-[15px] bg-black">模型</span>
        <svg width="7" height="15" viewBox="0 0 7 15"><path d="M0 0h6L2 15H0z" fill="#000" /></svg>
      </button>
      <button type="button" className="flex h-[15px] text-[12px] leading-[14px]">
        <svg width="5" height="15" viewBox="0 0 5 15" fill="none" stroke="#000"><path d="M0 0l3 14.500h2" /></svg>
        <span className="h-[15px] border-b border-black">布局1</span>
        <svg width="9" height="15" viewBox="0 0 9 15" fill="none" stroke="#000"><path d="M8.500 0L4 14.500H0" /></svg>
      </button>
    </div>
  );
}

function CommandLine() {
  return (
    <div className="mt-[5px] shrink-0 border-t border-[#999]">
      <div className="border-t border-black pt-[4px]">
        <div className="ml-[2px] border-t border-l border-[#999]">
          <div className="border-t border-l border-black text-[14px]">
            <div className="h-[30px] pl-[1px] leading-[14px] whitespace-pre">
              <p>命令： 指定对角点：</p>
              <p>命令： _.erase 找到 2 个</p>
            </div>
            <label className="flex h-[18px] items-center border-t border-[#999] pl-[1px] leading-[16px]">
              命令：
              <input aria-label="命令" className="h-[15px] min-w-0 grow outline-none" />
              <span className="mr-[6px] flex gap-px self-end">
                <span className="h-[4px] w-[16px] rounded-b-sm border-b border-[#b4b4e0] bg-[#dcdcf4]" />
                <span className="mr-[14px] h-[4px] w-[16px] rounded-b-sm border-b border-[#b4b4b4] bg-[#e4e4e4]" />
                <span className="h-[4px] w-[16px] rounded-b-sm border-b border-[#b4b4e0] bg-[#dcdcf4]" />
              </span>
            </label>
          </div>
        </div>
      </div>
      <div className="border-t border-[#999] pt-px">
        <div className="h-[2px] bg-[#c8c8c8]" />
      </div>
    </div>
  );
}

function StatusButton({ label, pressed }: { label: string; pressed?: boolean }) {
  return (
    <button
      type="button"
      className={clsx(
        "h-[18px] shrink-0 px-[1px] leading-[18px] whitespace-nowrap",
        pressed ? "border-t border-l border-black pr-[2px]" : "border-r border-b border-[#999] pt-px pl-[2px]",
        label === "DYN" ? "w-[22px] text-[10px]" : "text-[12px]",
      )}
    >
      {label}
    </button>
  );
}

function StatusBar() {
  return (
    <footer className="flex h-[19px] shrink-0 gap-1 overflow-hidden border-t border-[#c4c4f4] text-[12px]">
      <div className="flex">
        <button type="button" className="-ml-[7px] flex w-[79px] items-center gap-[5px] pt-[2px] whitespace-nowrap">
          比例
          <span className="text-[10px]">1:100</span>
          <svg width="7" height="4" viewBox="0 0 7 4"><path d="M0 0h7L3.500 4z" /></svg>
        </button>
        <input
          aria-label="坐标"
          readOnly
          defaultValue="20422, 3809, 0"
          className="h-[18px] w-[251px] border border-[#999] pt-[2px] pl-[1px] text-[10px]"
        />
      </div>
      <StatusButton label="捕捉" />
      <StatusButton label="栅格" />
      <StatusButton label="正交" />
      <StatusButton label="极轴" />
      <StatusButton label="对象捕捉" pressed />
      <StatusButton label="对象追踪" pressed />
      <StatusButton label="DYN" pressed />
      <StatusButton label="线宽" />
      <StatusButton label="模型" pressed />
      <span className="w-[15px] shrink-0" />
      <StatusButton label="基线" />
      <StatusButton label="填充" />
      <StatusButton label="加粗" />
      <StatusButton label="动态标注" />
      <div className="ml-auto flex w-[40px] shrink-0 items-center gap-[5px] border-t border-l border-[#999] pl-[3px]">
        <svg width="16" height="16" viewBox="0 0 16 16" className="shrink-0">
          <path d="M1 2l5 3 5-4v4l3 1-6 6-6 1z" fill="#a9b3c8" stroke="#6b7690" strokeWidth=".7" />
          <path d="M10 4l6 11H4z" fill="#ffe030" stroke="#8a7a14" />
          <path d="M10 8v4M10 13v1.500" stroke="#111" strokeWidth="1.400" />
        </svg>
        <svg width="16" height="16" viewBox="0 0 16 16" className="shrink-0">
          <path d="M8 7V4c0-4 6-4 6 0v2" fill="none" stroke="#555" strokeWidth="2" />
          <path d="M.5 6.500h10v8H.5z" fill="#f0c830" stroke="#6b5a10" />
          <path d="M1 9.500h9M1 12h9" stroke="#8a7414" />
          <path d="M4.500 8.500h2v4h-2z" fill="#222" />
        </svg>
      </div>
    </footer>
  );
}

function Balloon() {
  return (
    <aside className="absolute right-0 bottom-[28px] h-[74px] w-[170px] rounded-l-[14px] border border-r-0 border-black bg-[#ffffcc] text-[12px]">
      <div className="flex items-start pt-[8px] pl-[9px]">
        <svg width="16" height="17" viewBox="0 0 16 17" className="shrink-0">
          <path d="M8 .5a7.300 7 0 0 1 1.500 13.800V16.500L6 14.300A7.300 7 0 0 1 8 .5z" fill="#e8f1fc" stroke="#8fa9c8" />
          <path d="M7 4h2.300M6 7h2.500v5M6 12h5" fill="none" stroke="#1c4fc0" strokeWidth="1.900" />
        </svg>
        <strong className="pl-[9px] leading-[14px]">通讯中心</strong>
        <button type="button" aria-label="关闭" className="ml-auto flex h-[16px] w-[11px] items-center border border-r-0 border-[#999] bg-white pl-[3px]">
          <svg width="7" height="8" viewBox="0 0 7 8" className="shrink-0"><path d="M0 1l7 6M0 7l7-6" stroke="#000" strokeWidth="2" /></svg>
        </button>
      </div>
      <div className="overflow-hidden pl-[14px] whitespace-nowrap">
        <p className="pt-[3px] leading-[18px]">使软件保持最新的简单方法。</p>
        <a href="#update" className="block leading-[18px] text-[#0000ee] underline">单击此处。</a>
      </div>
      <svg width="22" height="21" viewBox="0 0 22 21" className="absolute right-[26px] -bottom-[21px]">
        <path d="M2 0l17 19.500V0" fill="#ffffcc" stroke="#000" />
        <path d="M3 0h15.500" stroke="#ffffcc" strokeWidth="2" />
      </svg>
    </aside>
  );
}

export default function App() {
  return (
    <div className="relative flex min-h-screen flex-col overflow-hidden border border-black bg-white font-['Liberation_Mono','Noto_Sans_CJK_SC',monospace] text-black">
      <MenuBar />
      <Toolbars />
      <main className="flex grow">
        <DrawBar />
        <div className="mt-px ml-px flex min-w-0 grow flex-col border-t-2 border-r border-l-2 border-[#999] border-r-[#c8c8c8]">
          <div className="relative grow overflow-hidden bg-black">
            <Crosshair />
            <UcsIcon />
          </div>
          <LayoutTabs />
        </div>
        <ModifyBar />
      </main>
      <CommandLine />
      <StatusBar />
      <Balloon />
    </div>
  );
}
